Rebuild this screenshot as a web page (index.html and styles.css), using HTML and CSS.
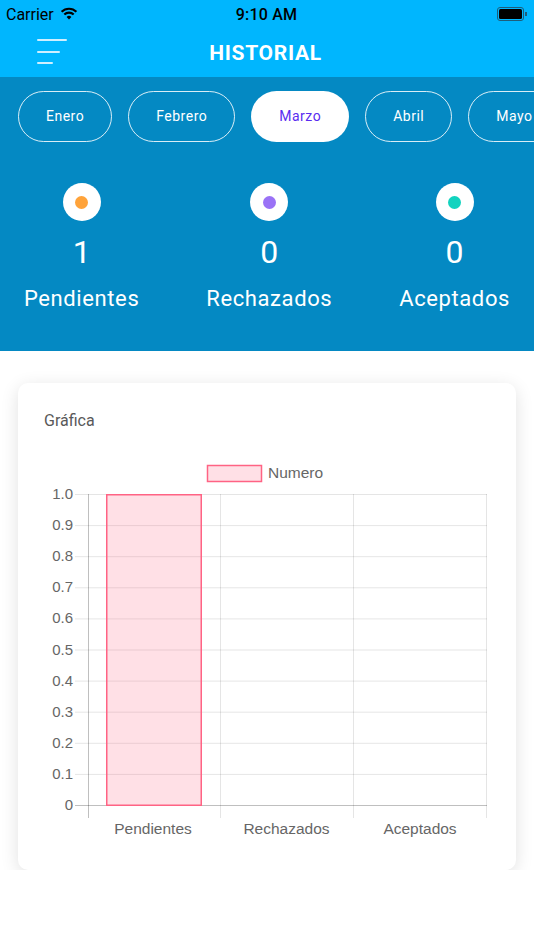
FILE: index.html
```html
<!DOCTYPE html>
<html lang="es">
<head>
    <meta charset="UTF-8">
    <title>Historial</title>
    <link rel="stylesheet" href="styles.css">
</head>
<body>
<div class="top">
    <div class="status">
        <div class="status-left">
            <span>Carrier</span>
            <svg class="wifi" width="18" height="13" viewBox="0 0 18 13">
                <path d="M9 12.5 L6.6 9.9 A3.4 3.4 0 0 1 11.4 9.9 Z" fill="#000"/>
                <path d="M4.3 7.6 A6.6 6.6 0 0 1 13.7 7.6" stroke="#000" stroke-width="2.1" fill="none"/>
                <path d="M1.6 4.8 A10.4 10.4 0 0 1 16.4 4.8" stroke="#000" stroke-width="2.1" fill="none"/>
            </svg>
        </div>
        <div class="status-time">9:10 AM</div>
        <div class="status-right">
            <div class="battery"><div class="battery-fill"></div></div>
            <div class="battery-nub"></div>
        </div>
    </div>
    <div class="navbar">
        <div class="menu">
            <span class="menu-line l1"></span>
            <span class="menu-line l2"></span>
            <span class="menu-line l3"></span>
        </div>
        <h1 class="title">HISTORIAL</h1>
    </div>
</div>

<div class="band">
    <div class="months">
        <div class="pill">Enero</div>
        <div class="pill">Febrero</div>
        <div class="pill active">Marzo</div>
        <div class="pill">Abril</div>
        <div class="pill">Mayo</div>
    </div>
    <div class="stats">
        <div class="stat">
            <div class="dot-ring"><span class="dot orange"></span></div>
            <div class="stat-num">1</div>
            <div class="stat-label">Pendientes</div>
        </div>
        <div class="stat">
            <div class="dot-ring"><span class="dot purple"></span></div>
            <div class="stat-num">0</div>
            <div class="stat-label">Rechazados</div>
        </div>
        <div class="stat">
            <div class="dot-ring"><span class="dot teal"></span></div>
            <div class="stat-num">0</div>
            <div class="stat-label">Aceptados</div>
        </div>
    </div>
</div>

<div class="card">
    <div class="card-title">Gráfica</div>
    <svg class="chart" width="498" height="400" viewBox="0 0 498 400">
        <!-- legend -->
        <rect x="189.5" y="15.5" width="54" height="16" fill="rgba(255,99,132,0.2)" stroke="#ff6384" stroke-width="1.5"/>
        <text x="250" y="28" class="legend-text">Numero</text>

        <!-- horizontal grid -->
        <g stroke="rgba(0,0,0,0.1)" stroke-width="1">
            <line x1="57" y1="44.5" x2="469" y2="44.5"/>
            <line x1="57" y1="75.6" x2="469" y2="75.6"/>
            <line x1="57" y1="106.7" x2="469" y2="106.7"/>
            <line x1="57" y1="137.8" x2="469" y2="137.8"/>
            <line x1="57" y1="168.9" x2="469" y2="168.9"/>
            <line x1="57" y1="200" x2="469" y2="200"/>
            <line x1="57" y1="231.1" x2="469" y2="231.1"/>
            <line x1="57" y1="262.2" x2="469" y2="262.2"/>
            <line x1="57" y1="293.3" x2="469" y2="293.3"/>
            <line x1="57" y1="324.4" x2="469" y2="324.4"/>
        </g>
        <!-- vertical grid -->
        <g stroke="rgba(0,0,0,0.1)" stroke-width="1">
            <line x1="202.5" y1="44" x2="202.5" y2="368"/>
            <line x1="335.5" y1="44" x2="335.5" y2="368"/>
            <line x1="468.5" y1="44" x2="468.5" y2="368"/>
        </g>
        <g stroke="rgba(0,0,0,0.25)" stroke-width="1">
            <line x1="70.5" y1="44" x2="70.5" y2="368"/>
            <line x1="57" y1="355.5" x2="469" y2="355.5"/>
        </g>

        <!-- bar -->
        <rect x="88.75" y="44.75" width="94.5" height="310.5" fill="rgba(255,99,132,0.2)" stroke="#ff6384" stroke-width="1.5"/>

        <!-- y labels -->
        <g class="axis-text" text-anchor="end">
            <text x="55" y="49">1.0</text>
            <text x="55" y="80">0.9</text>
            <text x="55" y="111">0.8</text>
            <text x="55" y="142">0.7</text>
            <text x="55" y="173">0.6</text>
            <text x="55" y="205">0.5</text>
            <text x="55" y="236">0.4</text>
            <text x="55" y="267">0.3</text>
            <text x="55" y="298">0.2</text>
            <text x="55" y="329">0.1</text>
            <text x="55" y="360">0</text>
        </g>
        <!-- x labels -->
        <g class="axis-text x-labels" text-anchor="middle">
            <text x="135" y="384">Pendientes</text>
            <text x="268.5" y="384">Rechazados</text>
            <text x="402" y="384">Aceptados</text>
        </g>
    </svg>
</div>
</body>
</html>
```

FILE: styles.css
```css
html, body {
    margin: 0;
    background: #fff;
    font-family: Roboto, "Liberation Sans", sans-serif;
    overflow: hidden;
}

.top {
    background: #00b6fe;
}

.status {
    height: 28px;
    display: flex;
    align-items: center;
    justify-content: space-between;
    padding: 0 7px 0 6px;
    font-size: 16px;
    color: #000;
}

.status-left {
    display: flex;
    align-items: center;
    gap: 6px;
    width: 120px;
}

.wifi {
    display: block;
    margin-top: -2px;
}

.status-time {
    font-weight: 500;
    letter-spacing: .2px;
}

.status-right {
    width: 120px;
    display: flex;
    justify-content: flex-end;
    align-items: center;
}

.battery {
    width: 23px;
    height: 10px;
    border: 1px solid #1f5d7a;
    border-radius: 3px;
    padding: 1px;
    box-sizing: content-box;
}

.battery-fill {
    width: 100%;
    height: 100%;
    background: #000;
    border-radius: 1.5px;
}

.battery-nub {
    width: 1.5px;
    height: 4px;
    background: #1f5d7a;
    margin-left: 1px;
}

.navbar {
    height: 49px;
    position: relative;
    display: flex;
    align-items: center;
    justify-content: center;
}

.menu {
    position: absolute;
    left: 37px;
    top: 11px;
    width: 30px;
    height: 25px;
    display: flex;
    flex-direction: column;
    justify-content: space-between;
}

.menu-line {
    display: block;
    height: 2px;
    background: #cfefff;
    border-radius: 1px;
}

.l1 { width: 30px; }
.l2 { width: 23px; }
.l3 { width: 16px; }

.title {
    margin: 0 0 0 -3px;
    color: #fff;
    font-size: 21px;
    font-weight: 700;
    letter-spacing: .7px;
    padding-top: 1px;
}

.band {
    background: #0489c3;
    height: 274px;
    overflow: hidden;
}

.months {
    display: flex;
    gap: 16px;
    padding: 14px 0 0 18px;
    white-space: nowrap;
}

.pill {
    flex: none;
    height: 49px;
    line-height: 49px;
    padding: 0 27px;
    border: 1.5px solid rgba(255, 255, 255, .85);
    border-radius: 26px;
    color: #fff;
    font-size: 14px;
    letter-spacing: .5px;
}

.pill.active {
    background: #fff;
    color: #5a2cf0;
}

.stats {
    display: flex;
    justify-content: space-between;
    padding: 41px 24px 0 24px;
}

.stat {
    display: flex;
    flex-direction: column;
    align-items: center;
    color: #fff;
}

.dot-ring {
    width: 38px;
    height: 38px;
    border-radius: 50%;
    background: #fff;
    display: flex;
    align-items: center;
    justify-content: center;
}

.dot {
    width: 13px;
    height: 13px;
    border-radius: 50%;
}

.orange { background: #ffa33a; }
.purple { background: #9a72f6; }
.teal { background: #12d3bf; }

.stat-num {
    font-size: 32px;
    font-weight: 400;
    line-height: 38px;
    margin-top: 12px;
}

.stat-label {
    font-size: 22px;
    line-height: 26px;
    margin-top: 15px;
    letter-spacing: .6px;
}

.card {
    margin: 32px 18px 0;
    background: #fff;
    border-radius: 10px;
    box-shadow: 0 4px 18px rgba(0, 0, 0, .12);
    padding-top: 28px;
    height: 459px;
}

.card-title {
    padding: 0 26px;
    font-size: 16px;
    line-height: 20px;
    color: #595959;
}

.chart {
    display: block;
    margin-top: 19px;
    font-family: "Liberation Sans", Arial, sans-serif;
}

.legend-text {
    font-size: 15.5px;
    fill: #666;
}

.axis-text {
    font-size: 15px;
    fill: #666;
}

.x-labels {
    font-size: 15.5px;
}
```
